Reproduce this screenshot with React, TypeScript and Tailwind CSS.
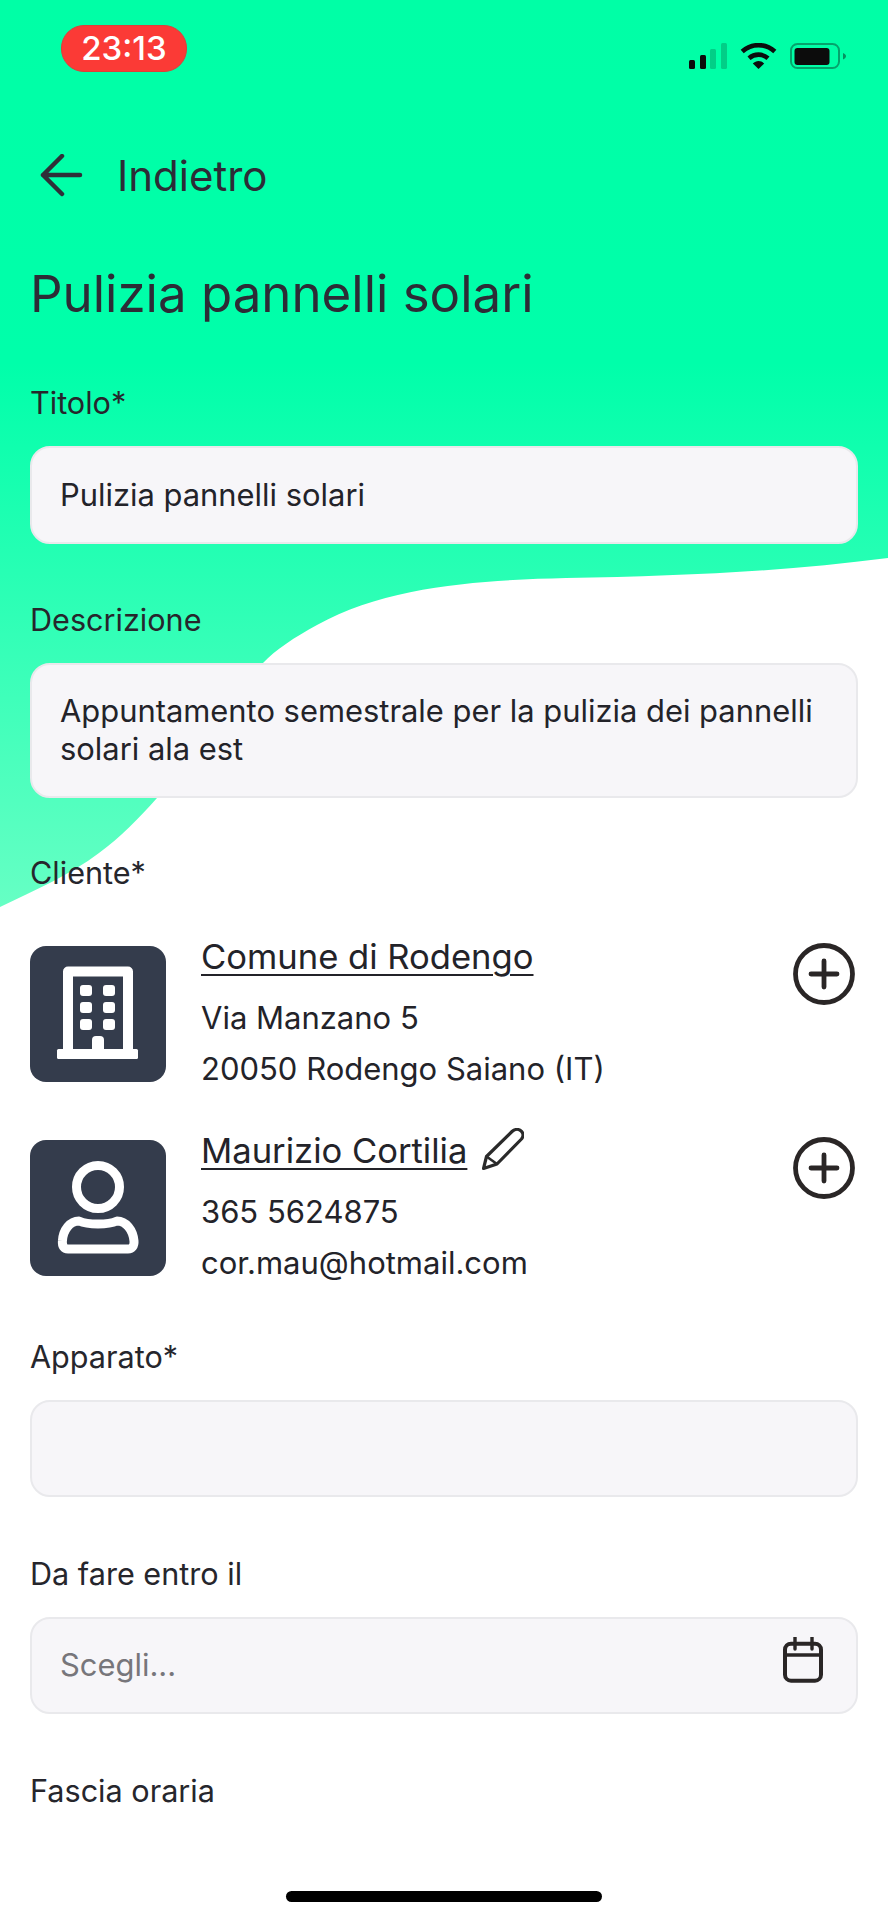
const Label = ({ children, className = "" }: { children: string; className?: string }) => (
  <div className={`ml-[30px] h-[34px] text-[30.600px] leading-[34px] text-[#26262c] ${className}`}>{children}</div>
);

const inputClass =
  "mt-[26px] mx-[30px] rounded-[20px] border-2 border-[#e9e9ec] bg-[#f7f6f9] px-[28px] text-[30.900px]";

function SignalIcon() {
  return (
    <svg width="38" height="26" viewBox="0 0 38 26" className="block">
      <rect x="0" y="17" width="6" height="9" rx="1.5" fill="#0c0c0c" />
      <rect x="11" y="12" width="6" height="14" rx="1.5" fill="#0c0c0c" />
      <rect x="21" y="6" width="6" height="20" rx="1.5" fill="#0c0c0c" fillOpacity="0.2" />
      <rect x="32" y="0" width="6" height="26" rx="1.5" fill="#0c0c0c" fillOpacity="0.2" />
    </svg>
  );
}

function WifiIcon() {
  return (
    <svg width="37" height="26" viewBox="0 0 37 26" className="block">
      <path d="M2.2 8.5C11.5 0 25.5 0 34.8 8.5" fill="none" stroke="#0c0c0c" strokeWidth="4.6" />
      <path d="M9 15.2C14.5 10.4 22.5 10.4 28 15.2" fill="none" stroke="#0c0c0c" strokeWidth="4.6" />
      <path d="M12.8 20.6C16.2 17.2 20.8 17.2 24.2 20.6L18.5 26Z" fill="#0c0c0c" />
    </svg>
  );
}

function BatteryIcon() {
  return (
    <svg width="56" height="26" viewBox="0 0 56 26" className="block">
      <rect x="1" y="1" width="48" height="24" rx="6.5" fill="none" stroke="#0c0c0c" strokeOpacity="0.38" strokeWidth="2" />
      <rect x="4.5" y="5" width="35" height="17" rx="3" fill="#0c0c0c" />
      <path d="M53 10C55 11 56 12 56 13.2C56 14.4 55 15.4 53 16.4Z" fill="#0c0c0c" fillOpacity="0.45" />
    </svg>
  );
}

function BuildingIcon() {
  return (
    <svg width="136" height="136" viewBox="0 0 136 136" className="block">
      <path d="M38 106V25.500H98V106" fill="none" stroke="#fff" strokeWidth="10" strokeLinejoin="round" />
      <rect x="27" y="103" width="81" height="10" rx="1.5" fill="#fff" />
      <g fill="#fff">
        <rect x="50" y="39" width="12" height="11" rx="3" />
        <rect x="73" y="39" width="12" height="11" rx="3" />
        <rect x="50" y="56" width="12" height="11" rx="3" />
        <rect x="73" y="56" width="12" height="11" rx="3" />
        <rect x="50" y="73" width="12" height="11" rx="3" />
        <rect x="73" y="73" width="12" height="11" rx="3" />
        <path d="M62 106V94a4 4 0 0 1 4-4h4a4 4 0 0 1 4 4v12Z" />
      </g>
    </svg>
  );
}

function PersonIcon() {
  return (
    <svg width="136" height="136" viewBox="0 0 136 136" className="block">
      <circle cx="68" cy="47" r="21.500" fill="none" stroke="#fff" strokeWidth="9" />
      <path
        d="M49 81C58 85 78 85 87 81C96 81 103 90 104 101C104.400 106 102 109 98 109H38C34 109 32 106 32.400 101C33 90 40 81 49 81Z"
        fill="none"
        stroke="#fff"
        strokeWidth="9"
        strokeLinejoin="round"
      />
    </svg>
  );
}

function PlusCircle() {
  return (
    <svg width="62" height="62" viewBox="0 0 62 62" className="block">
      <circle cx="31" cy="31" r="28.500" fill="none" stroke="#2a2626" strokeWidth="4.800" />
      <path d="M31 18V44M18 31H44" fill="none" stroke="#2a2626" strokeWidth="4.800" strokeLinecap="round" />
    </svg>
  );
}

function PencilIcon() {
  return (
    <svg width="42" height="42" viewBox="0 0 42 42" className="block">
      <path
        d="M1.500 40.500L4.500 28.500L30 3.500C33 0.800 37 0.800 39.500 3.300C41.500 5.500 41.500 8.500 39.500 11L15 36Z"
        fill="none"
        stroke="#2a2a2a"
        strokeWidth="3.200"
        strokeLinejoin="round"
      />
      <path d="M4.500 28.500L15 36" fill="none" stroke="#2a2a2a" strokeWidth="2.600" />
    </svg>
  );
}

function CalendarIcon() {
  return (
    <svg width="40" height="46" viewBox="0 0 40 46" className="block">
      <rect x="2" y="6.700" width="36" height="37" rx="6" fill="none" stroke="#2a2626" strokeWidth="4" />
      <path d="M2 18H38" stroke="#2a2626" strokeWidth="3.600" />
      <path d="M12 0V12M29 0V12" stroke="#2a2626" strokeWidth="3.400" strokeLinecap="round" />
    </svg>
  );
}

function ContactRow({
  icon,
  name,
  lines,
  edit,
  className = "",
}: {
  icon: React.ReactNode;
  name: string;
  lines: string[];
  edit?: boolean;
  className?: string;
}) {
  return (
    <div className={`mx-[30px] flex h-[136px] ${className}`}>
      <div className="h-[136px] w-[136px] shrink-0 rounded-[16px] bg-[#343c4c]">{icon}</div>
      <div className="ml-[35px] flex-1 -mt-[10px] text-[#232329]">
        <div className="flex h-[40px] items-center">
          <span className="text-[34.600px] leading-[40px] underline underline-offset-[5px] decoration-2">{name}</span>
          {edit && (
            <span className="ml-[15px] -mt-[2px]">
              <PencilIcon />
            </span>
          )}
        </div>
        <div className="mt-[17px] text-[31px] leading-[50.500px]">
          {lines.map((l) => (
            <div key={l}>{l}</div>
          ))}
        </div>
      </div>
      <div className="-mr-[-3px] -mt-[3px]">
        <PlusCircle />
      </div>
    </div>
  );
}

export default function App() {
  return (
    <div
      className="relative flex h-[1920px] w-[888px] flex-col overflow-hidden bg-white"
      style={{ fontFamily: "Inter, sans-serif" }}
    >
      <svg width="888" height="920" viewBox="0 0 888 920" className="absolute left-0 top-0">
        <defs>
          <linearGradient id="wave" x1="0" y1="0" x2="0" y2="1">
            <stop offset="0" stopColor="#00ffa6" />
            <stop offset="0.4" stopColor="#00ffaa" />
            <stop offset="1" stopColor="#66ffc4" />
          </linearGradient>
        </defs>
        <path
          d="M0 0H888V558C780 572 680 576 566 578C490 580 390 584 317 625C295 637 275 650 263 663C225 705 195 755 157 798C140 817 120 838 99 853C70 875 35 890 0 907Z"
          fill="url(#wave)"
        />
      </svg>

      <div className="relative flex h-full flex-col">
        <div className="flex h-[72px] items-start pt-[25px]">
          <div className="ml-[61px] flex h-[47px] w-[126px] items-center justify-center rounded-[23px] border border-[#dc3f3a] bg-[#fb3a36] text-[33px] font-medium text-white">
            23:13
          </div>
          <div className="ml-auto mr-[42px] mt-[18px] flex items-center gap-[13px]">
            <SignalIcon />
            <WifiIcon />
            <BatteryIcon />
          </div>
        </div>

        <div className="mt-[81px] ml-[39px] flex h-[46px] items-center">
          <svg width="44" height="44" viewBox="0 0 44 44" className="block">
            <path
              d="M41 21H4M23 2L4 21L23 40"
              fill="none"
              stroke="#2f2f38"
              strokeWidth="4.500"
              strokeLinecap="round"
              strokeLinejoin="round"
            />
          </svg>
          <span className="ml-[34px] text-[42px] leading-[46px] text-[#2c2c36]">Indietro</span>
        </div>

        <h1 className="mt-[64px] ml-[30px] h-[62px] text-[51px] leading-[62px] font-normal text-[#2c2c36]">
          Pulizia pannelli solari
        </h1>

        <Label className="mt-[61px]">Titolo*</Label>
        <div className={`${inputClass} flex h-[98px] items-center text-[#232329]`}>Pulizia pannelli solari</div>

        <Label className="mt-[59px]">Descrizione</Label>
        <div className={`${inputClass} h-[135px] pt-[27px] leading-[38px] text-[#232329]`}>
          Appuntamento semestrale per la pulizia dei pannelli solari ala est
        </div>

        <Label className="mt-[58px]">Cliente*</Label>
        <ContactRow
          className="mt-[56px]"
          icon={<BuildingIcon />}
          name="Comune di Rodengo"
          lines={["Via Manzano 5", "20050 Rodengo Saiano (IT)"]}
        />
        <ContactRow
          className="mt-[58px]"
          icon={<PersonIcon />}
          name="Maurizio Cortilia"
          edit
          lines={["365 5624875", "cor.mau@hotmail.com"]}
        />

        <Label className="mt-[64px]">Apparato*</Label>
        <div className={`${inputClass} h-[97px]`} />

        <Label className="mt-[60px]">Da fare entro il</Label>
        <div className={`${inputClass} flex h-[97px] items-center justify-between text-[#77767b]`}>
          <span>Scegli...</span>
          <span className="mr-[5px] -mt-[12px]">
            <CalendarIcon />
          </span>
        </div>

        <Label className="mt-[60px]">Fascia oraria</Label>

        <div className="mx-auto mb-[18px] mt-auto h-[11px] w-[316px] rounded-full bg-black" />
      </div>
    </div>
  );
}
